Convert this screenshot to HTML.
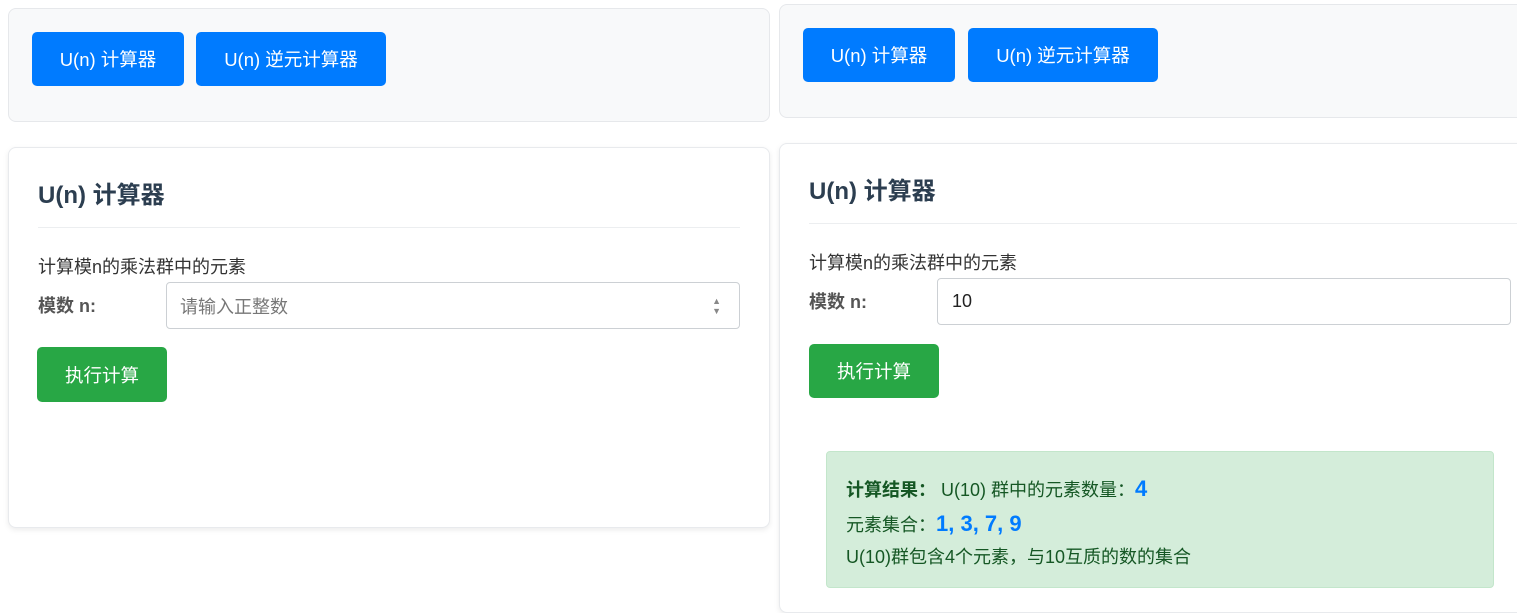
<!DOCTYPE html>
<html><head><meta charset="utf-8"><style>
*{box-sizing:border-box;margin:0;padding:0}
body{width:1517px;height:610px;overflow:hidden;background:#fff;font-family:"Liberation Sans","Noto Sans CJK SC",sans-serif;position:relative}
.a{position:absolute}
.nav{background:#f8f9fa;border:1px solid #e6e8eb;border-radius:8px}
.btn{position:absolute;background:#007bff;color:#fff;border-radius:5px;font-size:18.5px;display:flex;align-items:center;justify-content:center}
.card{background:#fff;border:1px solid #e8eaed;border-radius:8px;box-shadow:0 2px 6px rgba(0,0,0,.08)}
.title{position:absolute;font-size:24px;font-weight:bold;color:#2c3e50;line-height:28px}
.hr{position:absolute;height:1px;background:#eceef0}
.desc{position:absolute;font-size:18px;color:#333;line-height:22px}
.lbl{position:absolute;font-size:18px;font-weight:bold;color:#555;line-height:22px}
.inp{position:absolute;border:1px solid #ccd0d4;border-radius:4px;font-size:18px;padding-left:13px;display:flex;align-items:center;background:#fff}
.go{position:absolute;background:#28a745;color:#fff;border-radius:5px;font-size:18.5px;display:flex;align-items:center;justify-content:center}
</style></head><body>
<!-- left -->
<div class="a nav" style="left:8px;top:8px;width:762px;height:114px"></div>
<div class="btn" style="left:32px;top:32px;width:152px;height:54px">U(n) 计算器</div>
<div class="btn" style="left:196px;top:32px;width:190px;height:54px">U(n) 逆元计算器</div>
<div class="a card" style="left:8px;top:147px;width:762px;height:381px"></div>
<div class="title" style="left:38px;top:182px">U(n) 计算器</div>
<div class="hr" style="left:38px;top:227px;width:702px"></div>
<div class="desc" style="left:38px;top:256px">计算模n的乘法群中的元素</div>
<div class="lbl" style="left:38px;top:295px">模数 n:</div>
<div class="inp" style="left:166px;top:282px;width:574px;height:47px;color:#777">请输入正整数<span style="position:absolute;right:18px;top:13px;font-size:9px;line-height:10px;color:#888">▲<br>▼</span></div>
<div class="go" style="left:37px;top:347px;width:130px;height:55px">执行计算</div>
<!-- right -->
<div class="a nav" style="left:779px;top:4px;width:750px;height:114px"></div>
<div class="btn" style="left:803px;top:28px;width:152px;height:54px">U(n) 计算器</div>
<div class="btn" style="left:968px;top:28px;width:190px;height:54px">U(n) 逆元计算器</div>
<div class="a card" style="left:779px;top:143px;width:750px;height:470px"></div>
<div class="title" style="left:809px;top:178px">U(n) 计算器</div>
<div class="hr" style="left:809px;top:223px;width:708px"></div>
<div class="desc" style="left:809px;top:252px">计算模n的乘法群中的元素</div>
<div class="lbl" style="left:809px;top:291px">模数 n:</div>
<div class="inp" style="left:937px;top:278px;width:574px;height:47px;color:#222;padding-left:14px">10</div>
<div class="go" style="left:809px;top:344px;width:130px;height:54px">执行计算</div>
<div class="a" style="left:826px;top:451px;width:668px;height:137px;background:#d4edda;border:1px solid #c3e6cb;border-radius:4px;color:#155724;font-size:18px;line-height:22px">
 <div class="a" style="left:19px;top:26px"><b>计算结果：</b> U(10) 群中的元素数量：<b style="color:#007bff;font-size:22px">4</b></div>
 <div class="a" style="left:19px;top:61px">元素集合：<b style="color:#007bff;font-size:22px">1, 3, 7, 9</b></div>
 <div class="a" style="left:19px;top:94px">U(10)群包含4个元素，与10互质的数的集合</div>
</div>
</body></html>
